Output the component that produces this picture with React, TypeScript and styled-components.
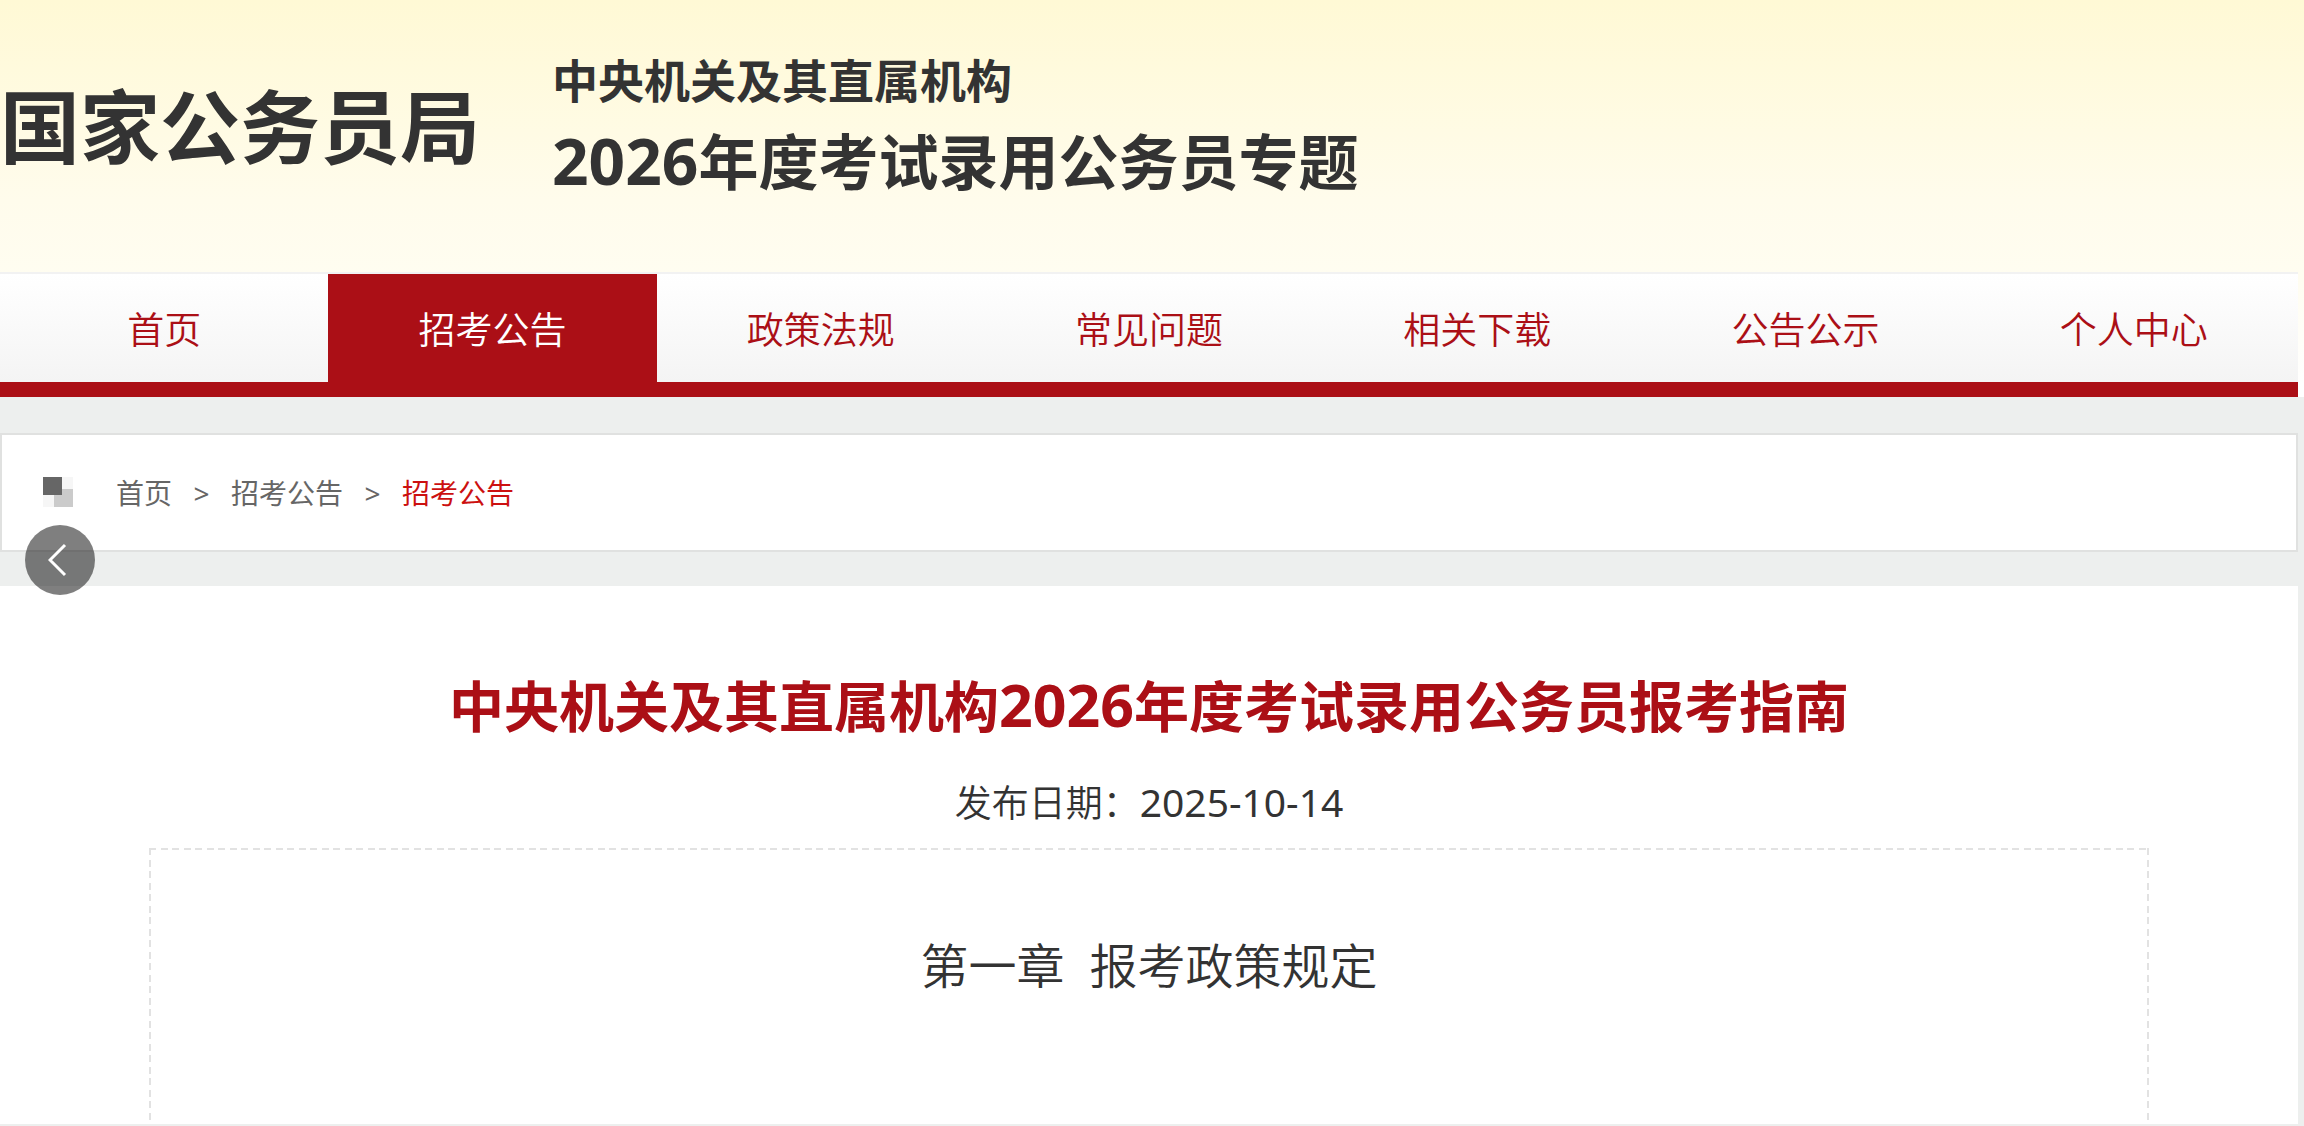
import React from 'react';
import styled, { createGlobalStyle } from 'styled-components';

const red = '#ab0f16';
const mist = '#edefee';

const GlobalStyle = createGlobalStyle`
  *, *::before, *::after { box-sizing: border-box; }
  body {
    margin: 0;
    background: ${mist};
    color: #333;
    font-family: 'Noto Sans', 'Noto Sans CJK SC', sans-serif;
  }
  h1, h2, p, ol, ul { margin: 0; padding: 0; }
  ol, ul { list-style: none; }
  a { color: inherit; text-decoration: none; }
`;

const Page = styled.div`
  min-height: 100vh;
  display: flex;
  flex-direction: column;
`;

const Top = styled.header`
  padding-right: 6px;
  background: linear-gradient(#fff9d5 0, #fffcec 200px, #fffdf1 280px, #fff 390px);
`;

const Brand = styled.div`
  display: flex;
  align-items: center;
  gap: 72px;
  height: 272px;
  padding-bottom: 20px;
`;

const Bureau = styled.h1`
  font-size: 80px;
  line-height: 80px;
  font-weight: 700;
`;

const Topic = styled.div`
  display: flex;
  flex-direction: column;
  gap: 16px;
  padding-bottom: 4px;
  font-weight: 700;
`;

const TopicLine = styled.p<{ $large?: boolean }>`
  font-size: ${(p) => (p.$large ? 60 : 46)}px;
  line-height: ${(p) => (p.$large ? 72 : 60)}px;
`;

const Digits = styled.span<{ $size: number; $regular?: boolean }>`
  font-size: ${(p) => p.$size}px;
  line-height: 1;
  font-weight: ${(p) => (p.$regular ? 400 : 'inherit')};
`;

const Nav = styled.nav`
  border-top: 2px solid #f2f2f2;
  border-bottom: 15px solid ${red};
  background: linear-gradient(#fff, #f4f4f4);
`;

const NavList = styled.ul`
  display: grid;
  grid-template-columns: repeat(7, 1fr);
`;

const NavLink = styled.a<{ $active?: boolean }>`
  display: flex;
  justify-content: center;
  align-items: center;
  height: 108px;
  font-size: 37px;
  font-weight: 350;
  color: ${(p) => (p.$active ? '#fff' : red)};
  background: ${(p) => (p.$active ? red : 'transparent')};
`;

const Crumbs = styled.nav`
  display: flex;
  align-items: center;
  gap: 43px;
  height: 119px;
  margin: 36px 6px 34px 0;
  padding-left: 41px;
  border: 2px solid #e0e1e0;
  background: #fff;
`;

const CrumbList = styled.ol`
  display: flex;
  align-items: center;
  font-size: 28px;
  line-height: 40px;
  color: #666;
`;

const Crumb = styled.li<{ $current?: boolean }>`
  display: flex;
  align-items: center;
  color: ${(p) => (p.$current ? '#cc1010' : 'inherit')};
`;

const Arrow = styled.span`
  width: 59px;
  text-align: center;
  font-size: 28px;
`;

const Article = styled.main`
  flex: 1;
  display: flex;
  flex-direction: column;
  align-items: stretch;
  margin: 0 6px 2px 0;
  padding: 84px 149px 0;
  background: #fff;
  text-align: center;
`;

const Title = styled.h2`
  font-size: 55px;
  line-height: 72px;
  font-weight: 700;
  color: ${red};
`;

const Published = styled.p`
  margin: 31px 0 15px;
  font-size: 37px;
  line-height: 60px;
  font-weight: 350;
`;

const dashes = (direction: string) =>
  `repeating-linear-gradient(${direction}, #e2e2e2 0 7px, transparent 7px 12px, #e2e2e2 12px 19px, transparent 19px 23px)`;

const Content = styled.section`
  flex: 1;
  padding: 82px 40px;
  background:
    ${dashes('to right')} top / 100% 2px no-repeat,
    ${dashes('to bottom')} left / 2px 100% no-repeat,
    ${dashes('to bottom')} right / 2px 100% no-repeat;
`;

const Chapter = styled.p`
  font-size: 48px;
  line-height: 72px;
  font-weight: 350;
`;

const BackButton = styled.button`
  position: fixed;
  left: 25px;
  top: 525px;
  display: grid;
  place-items: center;
  width: 70px;
  height: 70px;
  padding: 0;
  border: 0;
  border-radius: 50%;
  background: rgba(0, 0, 0, 0.5);
`;

const sections = ['首页', '招考公告', '政策法规', '常见问题', '相关下载', '公告公示', '个人中心'];

export default function App() {
  return (
    <Page>
      <GlobalStyle />
      <Top>
        <Brand>
          <Bureau>国家公务员局</Bureau>
          <Topic>
            <TopicLine>中央机关及其直属机构</TopicLine>
            <TopicLine $large>
              <Digits $size={64}>2026</Digits>年度考试录用公务员专题
            </TopicLine>
          </Topic>
        </Brand>
        <Nav>
          <NavList>
            {sections.map((name) => (
              <li key={name}>
                <NavLink href="#" $active={name === '招考公告'}>{name}</NavLink>
              </li>
            ))}
          </NavList>
        </Nav>
      </Top>
      <Crumbs>
        <svg width="30" height="32" viewBox="0 0 30 32" aria-hidden="true">
          <rect width="30" height="30" fill="#f6f6f6" />
          <rect x="11" y="12" width="19" height="18" fill="#cbcbcb" />
          <rect width="19" height="18" fill="#666" />
        </svg>
        <CrumbList>
          <Crumb>
            <a href="#">首页</a>
            <Arrow>&gt;</Arrow>
          </Crumb>
          <Crumb>
            <a href="#">招考公告</a>
            <Arrow>&gt;</Arrow>
          </Crumb>
          <Crumb $current>
            <a href="#">招考公告</a>
          </Crumb>
        </CrumbList>
      </Crumbs>
      <Article>
        <Title>
          中央机关及其直属机构<Digits $size={59}>2026</Digits>年度考试录用公务员报考指南
        </Title>
        <Published>
          发布日期：<Digits $size={39} $regular>2025-10-14</Digits>
        </Published>
        <Content>
          <Chapter>第一章&nbsp; 报考政策规定</Chapter>
        </Content>
      </Article>
      <BackButton type="button" aria-label="返回">
        <svg width="24" height="34" viewBox="0 0 24 34" fill="none" aria-hidden="true">
          <path d="M17 2 L2 17 L17 32" stroke="#fff" strokeWidth="3" />
        </svg>
      </BackButton>
    </Page>
  );
}
